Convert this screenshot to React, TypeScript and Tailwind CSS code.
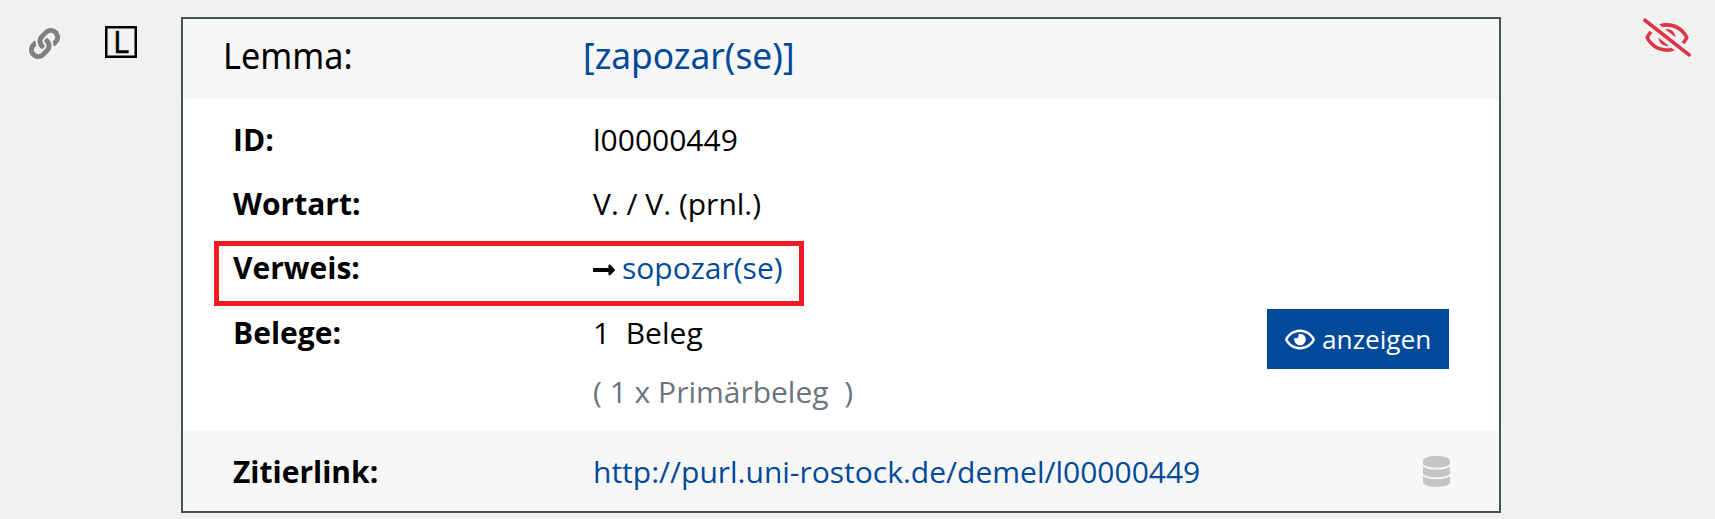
import type { ReactNode } from "react";
import { FaDatabase, FaLink, FaLongArrowAltRight, FaRegEye, FaRegEyeSlash } from "react-icons/fa";

function Row({ label, children, className = "" }: { label: string; children: ReactNode; className?: string }) {
  return (
    <div className={`flex ${className}`}>
      <dt className="w-[360px] shrink-0 font-bold">{label}</dt>
      <dd className="whitespace-pre">{children}</dd>
    </div>
  );
}

export default function App() {
  return (
    <div className="flex h-[519px] w-[1715px] items-start overflow-hidden bg-[#f1f1f1] font-['Open_Sans',sans-serif] text-[30px] leading-[45px] text-black">
      <aside className="flex w-[181px] shrink-0 items-start pl-[29px] pt-[26px]">
        <FaLink className="mt-[2px] size-[31px] text-[#808080]" />
        <span className="ml-[45px] h-8 w-8 border-[2px] border-black pl-[6px] font-['Noto_Sans',sans-serif] text-[31px] leading-[26px] shadow-[inset_0_0_0_0.5px_#000] [-webkit-text-stroke:0.3px_black]">
          L
        </span>
      </aside>

      <main className="relative mt-[17px] flex h-[496px] w-[1320px] shrink-0 flex-col border-2 border-[#455354] bg-white">
        <header className="flex h-20 shrink-0 bg-[#f7f7f7] pl-10 pt-[9px] font-['Noto_Sans',sans-serif] text-[37px] leading-[54px]">
          <h1 className="w-[360px] origin-left scale-x-[0.925]">Lemma:</h1>
          <a className="origin-left scale-x-[0.955] text-[#004a99]">[zapozar(se)]</a>
        </header>

        <section className="flex h-[332px] shrink-0 justify-between pl-[50px] pr-[50px] pt-[18px]">
          <dl>
            <Row label="ID:" className="h-16">l00000449</Row>
            <Row label="Wortart:" className="h-16">V. / V. (prnl.)</Row>
            <Row label="Verweis:" className="h-[65px]">
              <span className="flex">
                <FaLongArrowAltRight className="mt-[10px] h-[30px] w-[22px]" />
                <a className="ml-[7px] text-[#004a99]">sopozar(se)</a>
              </span>
            </Row>
            <Row label="Belege:" className="h-[118px]">
              <p className="h-[59px]">{"1  Beleg"}</p>
              <p className="text-[#6c757d]">{"( 1 x Primärbeleg  )"}</p>
            </Row>
          </dl>
          <button className="mt-[192px] flex h-[60px] w-[182px] items-center bg-[#004a99] pl-[18px] text-[26.25px] leading-[40px] text-white">
            <FaRegEye className="h-[27px] w-[30px]" />
            <span className="ml-[7px]">anzeigen</span>
          </button>
        </section>

        <footer className="flex h-20 shrink-0 justify-between bg-[#f7f7f7] pl-[50px] pr-[49px] pt-[18px]">
          <dl>
            <Row label="Zitierlink:">
              <a className="text-[#004a99]">http://purl.uni-rostock.de/demel/l00000449</a>
            </Row>
          </dl>
          <FaDatabase className="mt-[7px] h-[31px] w-[27px] text-[#c4c5c7]" />
        </footer>

        <div className="pointer-events-none absolute left-[31px] top-[222px] h-[65px] w-[590px] border-[5px] border-[#ed1c24]" />
      </main>

      <aside className="flex flex-1 justify-end pr-6 pt-[18px]">
        <FaRegEyeSlash className="h-[39px] w-[48px] text-[#dc3545]" />
      </aside>
    </div>
  );
}
